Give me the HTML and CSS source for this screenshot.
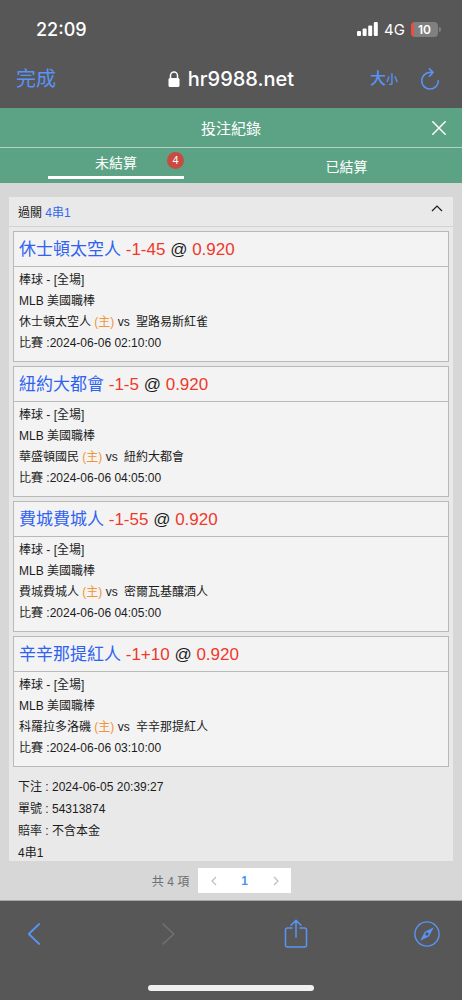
FILE: index.html
```html
<!DOCTYPE html>
<html lang="zh-Hant">
<head>
<meta charset="utf-8">
<meta name="viewport" content="width=device-width, initial-scale=1">
<title>投注紀錄</title>
<link rel="stylesheet" href="styles.css">
</head>
<body>
<div class="app">
  <header class="browser-top">
    <div class="status">
      <span class="clock">22:09</span>
      <div class="status-right">
        <svg class="signal" viewBox="0 0 21 14" aria-hidden="true"><rect x="0" y="9" width="4" height="5" rx="1"/><rect x="5.6" y="6.5" width="4" height="7.500" rx="1"/><rect x="11.200" y="3.500" width="4" height="10.500" rx="1"/><rect x="16.800" y="0" width="4" height="14" rx="1"/></svg>
        <span class="network">4G</span>
        <span class="battery">10</span>
        <span class="battery-tip"></span>
      </div>
    </div>
    <div class="address">
      <button class="done" type="button">完成</button>
      <div class="url">
        <svg class="lock" viewBox="0 0 12 16" aria-hidden="true"><path d="M2.500 8V4.500a3.500 3.500 0 0 1 7 0V8" fill="none" stroke="#fff" stroke-width="1.500"/><rect x=".5" y="7" width="11" height="9" rx="1.500" fill="#fff"/></svg>
        <span>hr9988.net</span>
      </div>
      <div class="address-tools">
        <button class="text-size" type="button">大<span class="text-size-small">小</span></button>
        <button class="icon-button" type="button" aria-label="重新載入">
          <svg class="reload" viewBox="0 0 20 22" fill="none" stroke="currentColor" stroke-width="1.600" stroke-linecap="round" stroke-linejoin="round"><path d="M12.500 4.400H10A8.300 8.300 0 1 0 18.300 12.700"/><path d="M9.500.9l3.500 3.500-3.500 3.800"/></svg>
        </button>
      </div>
    </div>
  </header>

  <div class="title-bar">
    <h1 class="title">投注紀錄</h1>
    <button class="close" type="button" aria-label="關閉">
      <svg class="close-icon" viewBox="0 0 14 14" fill="none" stroke="currentColor" stroke-width="1.500" stroke-linecap="round"><path d="M.8.8l12.400 12.400M13.200.8L.8 13.200"/></svg>
    </button>
  </div>
  <nav class="tabs">
    <button class="tab tab-active" type="button">未結算<span class="badge">4</span></button>
    <button class="tab" type="button">已結算</button>
  </nav>

  <main class="content">
    <section class="slip">
      <div class="slip-head">
        <span>過關 <span class="parlay">4串1</span></span>
        <button class="icon-button fold" type="button" aria-label="收合">
          <svg class="fold-icon" viewBox="0 0 12 7" fill="none" stroke="currentColor" stroke-width="1.200"><path d="M1 6l5-5 5 5"/></svg>
        </button>
      </div>
      <div class="cards">
        <article class="card">
          <h2 class="pick"><span class="team">休士頓太空人</span> <span class="odds">-1-45</span> @ <span class="odds">0.920</span></h2>
          <div class="details">
            <div>棒球 - [全場]</div>
            <div>MLB 美國職棒</div>
            <div>休士頓太空人 <span class="home">(主)</span> vs <span class="away">聖路易斯紅雀</span></div>
            <div>比賽 :2024-06-06 02:10:00</div>
          </div>
        </article>
        <article class="card">
          <h2 class="pick"><span class="team">紐約大都會</span> <span class="odds">-1-5</span> @ <span class="odds">0.920</span></h2>
          <div class="details">
            <div>棒球 - [全場]</div>
            <div>MLB 美國職棒</div>
            <div>華盛頓國民 <span class="home">(主)</span> vs <span class="away">紐約大都會</span></div>
            <div>比賽 :2024-06-06 04:05:00</div>
          </div>
        </article>
        <article class="card">
          <h2 class="pick"><span class="team">費城費城人</span> <span class="odds">-1-55</span> @ <span class="odds">0.920</span></h2>
          <div class="details">
            <div>棒球 - [全場]</div>
            <div>MLB 美國職棒</div>
            <div>費城費城人 <span class="home">(主)</span> vs <span class="away">密爾瓦基釀酒人</span></div>
            <div>比賽 :2024-06-06 04:05:00</div>
          </div>
        </article>
        <article class="card">
          <h2 class="pick"><span class="team">辛辛那提紅人</span> <span class="odds">-1+10</span> @ <span class="odds">0.920</span></h2>
          <div class="details">
            <div>棒球 - [全場]</div>
            <div>MLB 美國職棒</div>
            <div>科羅拉多洛磯 <span class="home">(主)</span> vs <span class="away">辛辛那提紅人</span></div>
            <div>比賽 :2024-06-06 03:10:00</div>
          </div>
        </article>
      </div>
      <div class="summary">
        <div>下注 : 2024-06-05 20:39:27</div>
        <div>單號 : 54313874</div>
        <div>賠率 : 不含本金</div>
        <div>4串1</div>
      </div>
    </section>
  </main>

  <div class="pagination">
    <span>共 4 項</span>
    <div class="pages">
      <button class="page" type="button" aria-label="上一頁"><svg class="page-arrow" viewBox="0 0 6 10" fill="none" stroke="currentColor" stroke-width="1.200"><path d="M5 1L1 5l4 4"/></svg></button>
      <button class="page page-current" type="button">1</button>
      <button class="page" type="button" aria-label="下一頁"><svg class="page-arrow" viewBox="0 0 6 10" fill="none" stroke="currentColor" stroke-width="1.200"><path d="M1 1l4 4-4 4"/></svg></button>
    </div>
  </div>

  <footer class="browser-bottom">
    <div class="toolbar">
      <button class="icon-button" type="button" aria-label="返回"><svg class="tool" viewBox="0 0 26 30" fill="none" stroke="currentColor" stroke-width="1.800" stroke-linecap="round" stroke-linejoin="round"><path d="M17.200 5L6.800 15l10.400 10"/></svg></button>
      <button class="icon-button tool-off" type="button" aria-label="前進" disabled><svg class="tool" viewBox="0 0 26 30" fill="none" stroke="currentColor" stroke-width="1.600" stroke-linecap="round" stroke-linejoin="round"><path d="M10 5l10.800 10L10 25"/></svg></button>
      <button class="icon-button" type="button" aria-label="分享"><svg class="tool" viewBox="0 0 26 30" fill="none" stroke="currentColor" stroke-width="1.500" stroke-linecap="round" stroke-linejoin="round"><path d="M9 9H4.500Q2.500 9 2.500 11v15Q2.500 28 4.500 28h17q2 0 2-2V11q0-2-2-2H17M13 18V1.500M8 6.300l5-4.900 5 4.900"/></svg></button>
      <button class="icon-button" type="button" aria-label="Safari"><svg class="tool" viewBox="0 0 26 30" fill="none" stroke="currentColor" stroke-width="1.400"><circle cx="13" cy="15" r="12.100"/><path fill="currentColor" stroke="none" fill-rule="evenodd" d="M19.800 8.200L15.200 17.200 6.200 21.800 10.800 12.800zM13 13.300a1.700 1.700 0 1 0 0 3.400 1.700 1.700 0 0 0 0-3.400z"/></svg></button>
    </div>
    <div class="home-indicator"></div>
  </footer>
</div>
</body>
</html>
```
FILE: styles.css
```css
* {
  box-sizing: border-box;
}

body {
  margin: 0;
  background: #575757;
  color: #1c1c1c;
  font-family: "Liberation Sans", "Noto Sans CJK TC", sans-serif;
  font-size: 12px;
}

button {
  border: 0;
  padding: 0;
  background: none;
  color: inherit;
  font: inherit;
}

svg {
  display: block;
}

.app {
  display: flex;
  flex-direction: column;
  height: 100vh;
}

.browser-top {
  flex: none;
  padding: 17px 16px 15px;
  background: #575757;
  color: #fff;
  font-family: Inter, "Noto Sans CJK TC", sans-serif;
}

.status {
  display: flex;
  align-items: center;
  justify-content: space-between;
  height: 24px;
  padding: 0 5px 0 20px;
}

.clock {
  font-size: 18px;
  font-weight: 500;
}

.status-right {
  display: flex;
  align-items: center;
}

.signal {
  width: 21px;
  height: 14px;
  fill: #fff;
}

.network {
  margin: 0 6px;
  font-size: 15px;
}

.battery {
  width: 27px;
  height: 15px;
  border-radius: 4px;
  background: linear-gradient(to right, #ea4f42 3px, #808080 3px);
  font-size: 12px;
  font-weight: 600;
  line-height: 15px;
  text-align: center;
}

.battery-tip {
  width: 2px;
  height: 5px;
  margin-left: 1px;
  border-radius: 0 2px 2px 0;
  background: #808080;
}

.address {
  display: grid;
  grid-template-columns: 1fr auto 1fr;
  align-items: center;
  height: 29px;
  margin-top: 23px;
}

.done {
  justify-self: start;
  color: #5a93f5;
  font-size: 20px;
  line-height: 28px;
}

.url {
  display: flex;
  align-items: center;
  gap: 8px;
  font-size: 20px;
  font-weight: 500;
}

.lock {
  width: 12px;
  height: 16px;
}

.address-tools {
  display: flex;
  align-items: center;
  justify-content: flex-end;
  gap: 22px;
  padding-right: 6px;
  color: #5a93f5;
}

.text-size {
  font-size: 16px;
  font-weight: 500;
  line-height: 24px;
}

.text-size-small {
  font-size: 12px;
}

.reload {
  width: 20px;
  height: 22px;
}

.title-bar {
  display: grid;
  grid-template-columns: 1fr auto 1fr;
  align-items: center;
  flex: none;
  height: 40px;
  padding: 0 16px;
  border-bottom: 1px solid #b3d3c5;
  background: #5ca385;
  color: #fff;
}

.title {
  grid-column: 2;
  margin: 0;
  font-size: 15px;
  font-weight: 400;
}

.close {
  justify-self: end;
}

.close-icon {
  width: 14px;
  height: 14px;
}

.tabs {
  display: grid;
  grid-template-columns: 1fr 1fr;
  flex: none;
  height: 35px;
  background: #5ca385;
  color: #fff;
}

.tab {
  position: relative;
  font-size: 14px;
}

.tab-active {
  margin: 0 47px 4px 48px;
  border-bottom: 3px solid #fff;
}

.badge {
  position: absolute;
  top: 4px;
  right: 0;
  width: 17px;
  height: 17px;
  border-radius: 50%;
  background: #c84b41;
  font-size: 11px;
  line-height: 17px;
}

.content {
  flex: 1;
  min-height: 0;
  padding: 14px 9px 0;
  background: #d7d7d7;
}

.slip {
  height: 100%;
  overflow-y: auto;
  scrollbar-width: none;
  background: #e9e9e9;
}

.slip-head {
  display: flex;
  align-items: center;
  justify-content: space-between;
  height: 30px;
  padding: 0 10px 0 9px;
  border-bottom: 1px solid #d2d2d2;
}

.parlay {
  color: #3366ee;
}

.fold {
  padding-bottom: 6px;
}

.fold-icon {
  width: 12px;
  height: 7px;
}

.cards {
  display: grid;
  gap: 4px;
  padding: 4px;
}

.card {
  border: 1px solid #b9b9b9;
  background: #f3f3f3;
}

.pick {
  margin: 0;
  padding: 2px 5px 0;
  border-bottom: 1px solid #b9b9b9;
  font-size: 17px;
  font-weight: 400;
  line-height: 32px;
}

.team {
  color: #2f62f0;
}

.odds {
  color: #ee392c;
}

.details {
  padding: 3px 5px 7px;
  line-height: 21px;
}

.home {
  color: #f19538;
}

.away {
  margin-left: 3px;
}

.summary {
  padding: 5px 9px 0;
  line-height: 22px;
}

.pagination {
  display: flex;
  align-items: center;
  justify-content: center;
  flex: none;
  gap: 9px;
  height: 40px;
  padding-right: 19px;
  border-bottom: 1px solid #a8a8a8;
  background: #d7d7d7;
  color: #6c6e72;
}

.pages {
  display: flex;
  background: #fff;
}

.page {
  display: grid;
  place-items: center;
  width: 31px;
  height: 25px;
  color: #bcbec4;
}

.page-current {
  color: #4a94f5;
  font-weight: 700;
}

.page-arrow {
  width: 6px;
  height: 10px;
}

.browser-bottom {
  display: flex;
  flex-direction: column;
  align-items: center;
  justify-content: space-between;
  flex: none;
  height: 99px;
  padding: 18px 0 9px;
  background: #575757;
}

.toolbar {
  display: flex;
  justify-content: space-between;
  width: 100%;
  padding: 0 22px;
  color: #5a93f5;
}

.tool {
  width: 26px;
  height: 30px;
}

.tool-off {
  color: #717171;
}

.home-indicator {
  width: 36%;
  height: 6px;
  border-radius: 3px;
  background: #f0f0f0;
}
```
